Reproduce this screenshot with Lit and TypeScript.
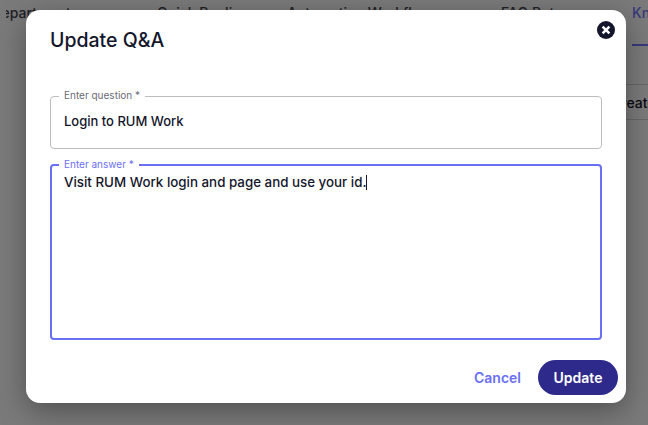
import { LitElement, html, css } from "lit";
import { customElement } from "lit/decorators.js";

@customElement("app-root")
export class AppRoot extends LitElement {
  static styles = css`
    :host {
      display: block;
      position: relative;
      width: 648px;
      height: 425px;
      overflow: hidden;
      background: #fff;
      font-family: "Inter", "Liberation Sans", sans-serif;
      color: #14162b;
    }
    .tabs {
      display: flex;
      height: 46px;
      font-size: 14px;
      line-height: 16px;
      font-weight: 500;
      white-space: nowrap;
      color: #45454f;
      padding-top: 5px;
      box-sizing: border-box;
      margin-left: 6px;
      overflow: hidden;
    }
    .tab { flex: none; }
    .t1 { width: 165.6px; margin-left: -14.6px; }
    .t2 { width: 130px; }
    .t3 { width: 214px; }
    .t4 { width: 131px; }
    .t5 {
      flex: 1;
      min-width: 0;
      color: #7478ff;
      border-bottom: 2px solid #7478ff;
      height: 41px;
      box-sizing: border-box;
    }
    .rows { padding: 38px 0 0 560px; }
    .row {
      display: flex;
      height: 36px;
      box-sizing: border-box;
      border-top: 1px solid #d8d8d8;
      border-bottom: 1px solid #d8d8d8;
      align-items: center;
      font-size: 14px;
      font-weight: 500;
      white-space: nowrap;
      padding-left: 51px;
    }
    .overlay {
      position: absolute;
      inset: 0;
      background: rgba(0, 0, 0, 0.52);
      padding: 10px 22px 22px 26px;
      box-sizing: border-box;
    }
    .modal {
      position: relative;
      height: 393px;
      background: #fff;
      border-radius: 14px;
      box-shadow: 0 8px 28px rgba(0, 0, 0, 0.34);
      padding: 19px 24px 0;
      box-sizing: border-box;
      display: flex;
      flex-direction: column;
    }
    h2 {
      margin: 0;
      font-size: 19.5px;
      line-height: 22px;
      font-weight: 500;
      color: #14162b;
    }
    .close {
      position: absolute;
      top: 11px;
      right: 11px;
      width: 18px;
      height: 18px;
      display: block;
    }
    fieldset {
      margin: 0;
      padding: 0 13px;
      border: 1px solid #bdbdbd;
      border-radius: 4px;
      min-width: 0;
      box-sizing: border-box;
    }
    legend {
      padding: 0 5px 2px;
      margin-left: -5px;
      font-size: 10px;
      line-height: 10px;
      color: #6b6b75;
      font-weight: 400;
    }
    .value {
      line-height: 18px;
      font-weight: 500;
    }
    .q { margin-top: 39px; height: 59px; }
    .q .value { padding-top: 10px; font-size: 13px; }
    .a {
      margin-top: 10px;
      height: 181px;
      border: 2px solid #6a6ff5;
      padding: 0 12px;
    }
    .a legend { color: #6a6ff5; }
    .a .value { padding-top: 2px; font-size: 13.35px; }
    .caret {
      display: inline-block;
      width: 1px;
      height: 15px;
      background: #14162b;
      vertical-align: -3px;
    }
    .actions {
      display: flex;
      justify-content: flex-end;
      align-items: center;
      gap: 17px;
      margin: 20px -16px 0 0;
    }
    .cancel {
      font-size: 14px;
      font-weight: 600;
      color: #6a6ff5;
    }
    .update {
      width: 80px;
      height: 35px;
      border-radius: 18px;
      background: #2e2a8c;
      color: #fff;
      font-size: 14px;
      font-weight: 600;
      display: flex;
      align-items: center;
      justify-content: center;
    }
  `;

  render() {
    return html`
      <div class="tabs">
        <div class="tab t1">Department</div>
        <div class="tab t2">Quick Replies</div>
        <div class="tab t3">Automation Workflow</div>
        <div class="tab t4">FAQ Bot</div>
        <div class="tab t5">Knowledge</div>
      </div>
      <div class="rows"><div class="row"><span>Create</span></div></div>
      <div class="overlay">
        <div class="modal">
          <h2>Update Q&amp;A</h2>
          <svg class="close" viewBox="0 0 18 18" aria-label="Close">
            <circle cx="9" cy="9" r="9" fill="#14162b"></circle>
            <path d="M5.6 5.6l6.8 6.8M12.4 5.6l-6.8 6.8" stroke="#fff" stroke-width="2.5" fill="none"></path>
          </svg>
          <fieldset class="q">
            <legend>Enter question *</legend>
            <div class="value">Login to RUM Work</div>
          </fieldset>
          <fieldset class="a">
            <legend>Enter answer *</legend>
            <div class="value">Visit RUM Work login and page and use your id.<span class="caret"></span></div>
          </fieldset>
          <div class="actions">
            <span class="cancel">Cancel</span>
            <span class="update">Update</span>
          </div>
        </div>
      </div>
    `;
  }
}
